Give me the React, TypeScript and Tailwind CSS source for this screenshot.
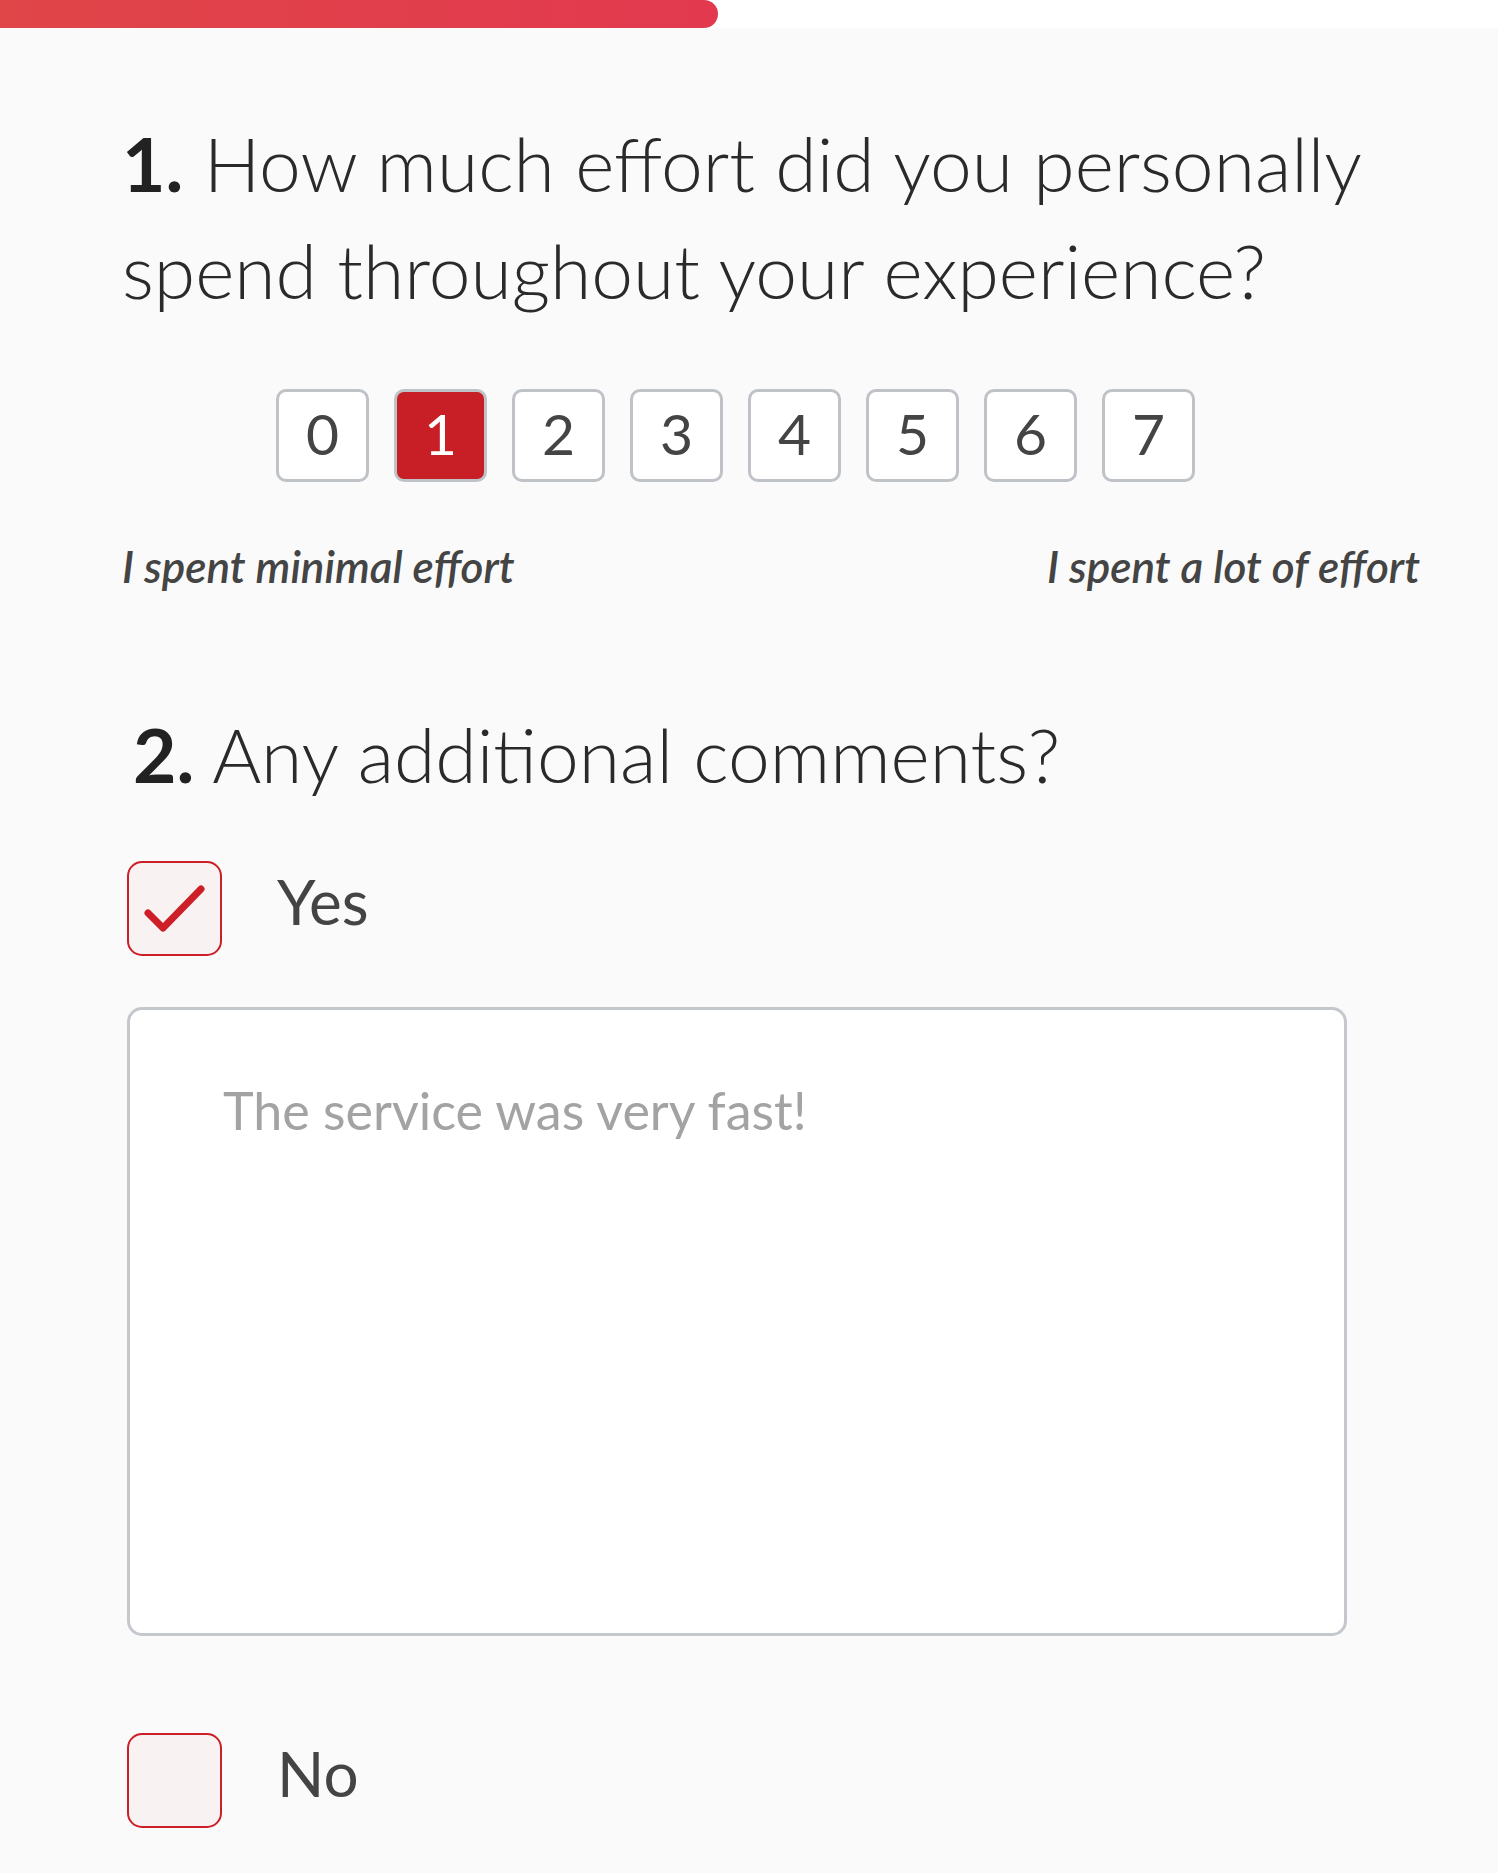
import { useState } from 'react';

const SCALE = [0, 1, 2, 3, 4, 5, 6, 7];

function Checkbox({ checked }: { checked: boolean }) {
  return (
    <div className="w-[95px] h-[95px] shrink-0 rounded-[15px] border-2 border-[#cc1f27] bg-[#f8f2f2]">
      {checked && (
        <svg viewBox="0 0 91 91" className="w-full h-full">
          <polyline
            points="19,50 34,65 72,26"
            fill="none"
            stroke="#cc1f27"
            strokeWidth="7"
            strokeLinecap="round"
            strokeLinejoin="round"
          />
        </svg>
      )}
    </div>
  );
}

export default function App() {
  const [score, setScore] = useState(1);

  return (
    <div className="min-h-screen bg-[#fafafa] font-['Lato',sans-serif] text-[#2a2a2a]">
      {/* progress */}
      <div className="h-[28px] bg-white">
        <div className="h-full w-[718px] rounded-r-full bg-gradient-to-r from-[#e04548] to-[#e2394f]" />
      </div>

      <div className="pl-[122px] pr-[78px] pb-[46px]">
        <h2 className="mt-[82px] text-[75px] leading-[107px] font-light">
          <span className="font-bold text-[#222]">1.</span> How much effort did you personally spend throughout your experience?
        </h2>

        <div className="mt-[65px] ml-[154px] flex gap-[25px]">
          {SCALE.map((n) => (
            <button
              key={n}
              onClick={() => setScore(n)}
              className={`w-[93px] h-[93px] rounded-[10px] border-[3px] border-[#bfc3c7] flex items-center justify-center pb-[5px] text-[57px] leading-none ${
                n === score ? 'bg-[#c81e25] text-white' : 'bg-white text-[#444]'
              }`}
            >
              {n}
            </button>
          ))}
        </div>

        <div className="mt-[55px] flex justify-between text-[44px] leading-[58px] italic font-semibold text-[#444]">
          <span>I spent minimal effort</span>
          <span>I spent a lot of effort</span>
        </div>

        <h2 className="mt-[106px] ml-[11px] text-[75px] leading-[107px] font-light">
          <span className="font-bold text-[#222]">2.</span> Any additional comments?
        </h2>

        <div className="mt-[53px] ml-[5px] flex items-start gap-[55px]">
          <Checkbox checked />
          <span className="-mt-[3px] text-[62px] leading-[86px] text-[#444]">Yes</span>
        </div>

        <textarea
          placeholder="The service was very fast!"
          className="mt-[51px] ml-[5px] block w-[1220px] h-[629px] resize-none rounded-[15px] border-[3px] border-[#c4c8cd] bg-white pl-[93px] pt-[63px] text-[52px] leading-[75px] text-[#444] placeholder:text-[#a3a3a3] outline-none"
        />

        <div className="mt-[97px] ml-[5px] flex items-start gap-[55px]">
          <Checkbox checked={false} />
          <span className="-mt-[3px] text-[62px] leading-[86px] text-[#444]">No</span>
        </div>
      </div>
    </div>
  );
}
